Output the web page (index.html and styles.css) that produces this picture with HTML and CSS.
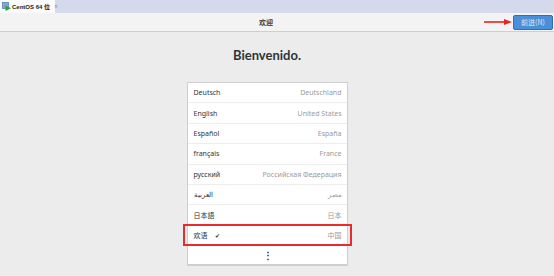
FILE: index.html
```html
<!doctype html>
<html lang="zh">
<head>
  <meta charset="UTF-8">
  <title>欢迎</title>
  <link rel="stylesheet" href="styles.css">
</head>
<body>
  <div class="tabbar">
    <div class="tab">
      <svg class="tab-icon" width="9" height="9" viewBox="0 0 9 9">
        <rect x="0.5" y="0.5" width="6" height="6" fill="#7fa6d6" stroke="#4f78b0" stroke-width="0.7"/>
        <polygon points="3.5,3.5 9,6.2 3.5,9" fill="#2aa33b"/>
      </svg>
      <span class="tab-title">CentOS 64 位</span>
      <span class="tab-close">×</span>
    </div>
  </div>

  <header class="topbar">
    <span class="topbar-title">欢迎</span>
    <svg class="arrow" width="28" height="6" viewBox="0 0 28 6">
      <line x1="0" y1="3" x2="22" y2="3" stroke="#e8231f" stroke-width="1.6"/>
      <polygon points="20,0 28,3 20,6" fill="#e8231f"/>
    </svg>
    <button class="next-btn">前进(N)</button>
  </header>

  <main class="content">
    <h1 class="welcome">Bienvenido.</h1>
    <ul class="lang-list">
      <li class="lang-row"><span>Deutsch</span><span class="region">Deutschland</span></li>
      <li class="lang-row"><span>English</span><span class="region">United States</span></li>
      <li class="lang-row"><span>Español</span><span class="region">España</span></li>
      <li class="lang-row"><span>français</span><span class="region">France</span></li>
      <li class="lang-row"><span>русский</span><span class="region">Российская Федерация</span></li>
      <li class="lang-row"><span>العربية</span><span class="region">مصر</span></li>
      <li class="lang-row"><span>日本語</span><span class="region">日本</span></li>
      <li class="lang-row selected"><span>欢语 <span class="check">✔</span></span><span class="region">中国</span></li>
      <li class="lang-row more">⋮</li>
    </ul>
  </main>
</body>
</html>
```

FILE: styles.css
```css
* {
    margin: 0;
    padding: 0;
    box-sizing: border-box;
}

body {
    width: 554px;
    height: 276px;
    overflow: hidden;
    background-color: #ececec;
    font-family: "Noto Sans", "Noto Sans CJK SC", sans-serif;
    color: #2e3436;
}

.tabbar {
    height: 13px;
    background-color: #d4daec;
    display: flex;
}

.tab {
    width: 55px;
    height: 13px;
    background-color: #fbfbfb;
    display: flex;
    align-items: center;
    padding-left: 2px;
    gap: 1px;
}

.tab-icon {
    flex-shrink: 0;
}

.tab-title {
    font-family: "Liberation Sans", "Noto Sans CJK SC", sans-serif;
    font-size: 6px;
    font-weight: bold;
    color: #222;
    white-space: nowrap;
}

.tab-close {
    font-size: 7px;
    color: #8a9ab8;
    margin-left: 3px;
}

.topbar {
    height: 19px;
    background-color: #f3f3f3;
    border-bottom: 1px solid #cfcfcf;
    display: flex;
    align-items: center;
    justify-content: flex-end;
    position: relative;
    padding-right: 1px;
}

.topbar-title {
    position: absolute;
    left: 0;
    right: 0;
    text-align: center;
    font-family: "Noto Sans CJK SC", sans-serif;
    font-size: 7px;
    font-weight: bold;
    color: #3a3a3a;
    padding-right: 22px;
}

.arrow {
    margin-right: 1px;
    position: relative;
}

.next-btn {
    width: 40px;
    height: 15px;
    background-color: #4a8fda;
    border: 1px solid #2f6fb8;
    border-radius: 2px;
    color: #dfe9f6;
    font-family: "Noto Sans CJK SC", sans-serif;
    font-size: 7px;
    position: relative;
}

.content {
    display: flex;
    flex-direction: column;
    align-items: center;
    padding-right: 20px;
}

.welcome {
    font-family: Lato, "Noto Sans", sans-serif;
    font-size: 13px;
    font-weight: bold;
    color: #2e3436;
    margin-top: 15px;
    height: 35px;
}

.lang-list {
    list-style: none;
    width: 161px;
    background-color: #fff;
    border: 1px solid #cfcfcf;
    border-bottom-width: 2px;
}

.lang-row {
    height: 20.4px;
    display: flex;
    align-items: center;
    justify-content: space-between;
    padding: 0 5px 0 6px;
    font-size: 7px;
    color: #2e3436;
    border-bottom: 1px solid #ececec;
    position: relative;
}

.region {
    color: #9a9a9a;
}

.selected::after {
    content: "";
    position: absolute;
    left: -5px;
    right: -5px;
    top: -2px;
    bottom: -1px;
    border: 2px solid #e62c2c;
}

.check {
    font-size: 6px;
    margin-left: 6px;
}

.more {
    justify-content: center;
    font-size: 10px;
    font-weight: bold;
    border-bottom: none;
    height: 18px;
}
```
